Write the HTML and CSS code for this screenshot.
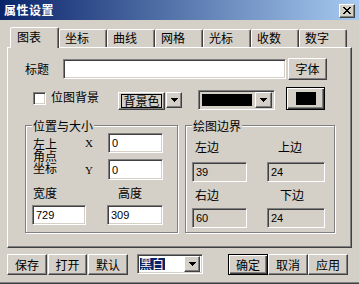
FILE: index.html
```html
<!DOCTYPE html>
<html lang="zh">
<head>
<meta charset="utf-8">
<title>属性设置</title>
<link rel="stylesheet" href="styles.css">
</head>
<body>
<div class="window">
  <div class="titlebar">
    <span class="title">属性设置</span>
    <span class="btn close"><svg width="8" height="7" viewBox="0 0 8 7" shape-rendering="crispEdges"><path d="M0 0h2v1h-2zM6 0h2v1h-2zM1 1h2v1h-2zM5 1h2v1h-2zM2 2h4v1h-4zM3 3h2v1h-2zM2 4h4v1h-4zM1 5h2v1h-2zM5 5h2v1h-2zM0 6h2v1h-2zM6 6h2v1h-2z" fill="#000"/></svg></span>
  </div>

  <div class="tabs">
    <div class="tab active">图表</div>
    <div class="tab">坐标</div>
    <div class="tab">曲线</div>
    <div class="tab">网格</div>
    <div class="tab">光标</div>
    <div class="tab">收数</div>
    <div class="tab">数字</div>
  </div>

  <div class="panel">
    <div class="row row-title">
      <span class="label title-label">标题</span>
      <span class="edit title-edit"></span>
      <span class="btn font-btn">字体</span>
    </div>

    <div class="row row-bg">
      <span class="check"></span>
      <span class="label check-label">位图背景</span>
      <span class="bg-btn btn"><span class="bg-value">背景色</span></span>
      <span class="btn drop drop-bg"><svg width="7" height="4" viewBox="0 0 7 4" shape-rendering="crispEdges"><path d="M0 0h7v1h-1v1h-1v1h-1v1h-1v-1h-1v-1h-1v-1h-1z" fill="#000"/></svg></span>
      <span class="color-combo edit"><span class="color-value"></span><span class="btn drop"><svg width="7" height="4" viewBox="0 0 7 4" shape-rendering="crispEdges"><path d="M0 0h7v1h-1v1h-1v1h-1v1h-1v-1h-1v-1h-1v-1h-1z" fill="#000"/></svg></span></span>
      <span class="btn swatch"><span class="swatch-fill"></span></span>
    </div>

    <div class="groups">
      <div class="group group-pos">
        <div class="group-title">位置与大小</div>
        <div class="coord">
          <span class="corner-label"><span class="cl">左上</span><span class="cl">角点</span><span class="cl">坐标</span></span>
          <span class="axis ax-x">X</span>
          <span class="edit num coord-x">0</span>
          <span class="axis ax-y">Y</span>
          <span class="edit num coord-y">0</span>
        </div>
        <div class="size">
          <span class="label w-label">宽度</span>
          <span class="label h-label">高度</span>
          <span class="edit num w-edit">729</span>
          <span class="edit num h-edit">309</span>
        </div>
      </div>

      <div class="group group-margin">
        <div class="group-title">绘图边界</div>
        <div class="margins">
          <span class="label m-l">左边</span>
          <span class="label m-t">上边</span>
          <span class="edit num disabled">39</span>
          <span class="edit num disabled">24</span>
          <span class="label m-r">右边</span>
          <span class="label m-b">下边</span>
          <span class="edit num disabled">60</span>
          <span class="edit num disabled">24</span>
        </div>
      </div>
    </div>
  </div>

  <div class="footer">
    <span class="btn fbtn">保存</span>
    <span class="btn fbtn open">打开</span>
    <span class="btn fbtn reset">默认</span>
    <span class="edit mode-combo"><span class="mode-value">黑白</span><span class="btn drop"><svg width="7" height="4" viewBox="0 0 7 4" shape-rendering="crispEdges"><path d="M0 0h7v1h-1v1h-1v1h-1v1h-1v-1h-1v-1h-1v-1h-1z" fill="#000"/></svg></span></span>
    <span class="btn fbtn default ok">确定</span>
    <span class="btn fbtn">取消</span>
    <span class="btn fbtn">应用</span>
  </div>
</div>
</body>
</html>
```

FILE: styles.css
```css
* { box-sizing: border-box; }

html, body {
  margin: 0;
  padding: 0;
}

body {
  width: 359px;
  height: 284px;
  overflow: hidden;
  background: #d4d0c8;
  font-family: "Noto Sans CJK SC", "Liberation Sans", sans-serif;
  font-size: 12px;
  line-height: 12px;
  color: #000;
}

.window {
  width: 359px;
  height: 284px;
  background: #d4d0c8;
  box-shadow: inset 0 -1px #404040, inset 0 -2px #808080;
}

/* ---------- title bar ---------- */
.titlebar {
  height: 20px;
  display: flex;
  align-items: center;
  justify-content: space-between;
  padding: 0 4px 0 4px;
  background: linear-gradient(to right, #0a246a, #a6caf0);
}

.title {
  color: #fff;
  font-weight: bold;
  font-size: 12px;
  letter-spacing: 0.5px;
  line-height: 14px;
}

/* ---------- generic 3D controls ---------- */
.btn {
  display: flex;
  align-items: center;
  justify-content: center;
  background: #d4d0c8;
  border: 1px solid;
  border-color: #fff #404040 #404040 #fff;
  box-shadow: inset -1px -1px #808080;
}

.btn.default {
  border-color: #000;
  box-shadow: inset 1px 1px #fff, inset -1px -1px #404040, inset -2px -2px #808080;
}

.edit {
  display: flex;
  align-items: center;
  background: #fff;
  border: 1px solid;
  border-color: #808080 #fff #fff #808080;
  box-shadow: inset 1px 1px #404040, inset -1px -1px #d4d0c8;
}

.edit.disabled { background: #d4d0c8; }

.num {
  font-family: "Liberation Sans", Arial, sans-serif;
  font-size: 11px;
  padding-left: 3px;
}

.label { display: block; white-space: nowrap; }

.close {
  width: 16px;
  height: 14px;
  margin-top: 1px;
}

/* ---------- tabs ---------- */
.tabs {
  display: flex;
  align-items: flex-end;
  height: 20px;
  margin-top: 7px;
  padding-left: 10px;
}

.tab {
  width: 48px;
  height: 18px;
  padding-left: 5px;
  line-height: 16px;
  background: #d4d0c8;
  border: 1px solid;
  border-bottom: 0;
  border-color: #fff #404040 transparent #fff;
  border-radius: 2px 2px 0 0;
  box-shadow: inset -1px 0 #808080;
}

.tab.active {
  position: relative;
  z-index: 1;
  width: 49px;
  height: 21px;
  margin-bottom: -1px;
  padding-left: 6px;
  line-height: 18px;
}

/* ---------- panel ---------- */
.panel {
  width: 345px;
  height: 201px;
  margin-left: 7px;
  border: 1px solid;
  border-color: #fff #404040 #404040 #fff;
  box-shadow: inset -1px -1px #808080;
}

.row { display: flex; }

.row-title {
  margin-top: 10px;
  height: 22px;
  align-items: center;
}

.title-label { margin-left: 17px; width: 24px; }
.title-edit { margin-left: 14px; width: 223px; height: 20px; }
.font-btn { margin-left: 2px; width: 39px; height: 22px; }

.row-bg {
  margin-top: 7px;
  height: 23px;
  align-items: flex-start;
}

.check {
  display: block;
  width: 13px;
  height: 13px;
  margin: 5px 0 0 25px;
  background: #fff;
  border: 1px solid;
  border-color: #808080 #fff #fff #808080;
  box-shadow: inset 1px 1px #404040, inset -1px -1px #d4d0c8;
}

.check-label { margin: 4px 0 0 5px; }

.bg-btn {
  width: 47px;
  height: 18px;
  margin: 5px 0 0 19px;
}

.bg-value {
  display: block;
  width: 41px;
  height: 14px;
  border: 1px solid #000;
  line-height: 12px;
  text-align: center;
}

.drop-bg {
  width: 18px;
  height: 18px;
  margin: 5px 0 0 1px;
}

.color-combo {
  width: 77px;
  height: 20px;
  margin: 3px 0 0 16px;
  padding: 2px;
  justify-content: space-between;
  background: #d4d0c8;
}

.color-value {
  display: block;
  width: 50px;
  height: 12px;
  margin-left: 1px;
  background: #000;
}

.drop {
  width: 16px;
  height: 16px;
}

.color-combo .drop { height: 16px; width: 17px; }

.swatch {
  width: 39px;
  height: 23px;
  margin-left: 11px;
  border-color: #000;
  box-shadow: inset 1px 1px #fff, inset -1px -1px #404040, inset -2px -2px #808080;
}

.swatch-fill {
  display: block;
  width: 20px;
  height: 13px;
  background: #000;
}

/* ---------- group boxes ---------- */
.groups {
  display: flex;
  margin-top: 15px;
}

.group {
  height: 108px;
  border: 1px solid #808080;
  box-shadow: inset 1px 1px #fff, 1px 1px #fff;
}

.group-pos { width: 153px; margin-left: 17px; }
.group-margin { width: 150px; margin-left: 7px; }

.group-title {
  width: max-content;
  margin: -7px 0 0 6px;
  padding: 0 1px;
  line-height: 13px;
  background: #d4d0c8;
}

.coord {
  display: grid;
  grid-template-columns: 52px 23px 55px;
  grid-template-rows: 20px 21px;
  row-gap: 6px;
  margin-top: 1px;
  padding-left: 7px;
}

.corner-label {
  grid-row: 1 / 3;
  grid-column: 1;
  margin-top: 5px;
}

.cl {
  display: block;
  height: 12px;
  line-height: 12px;
}

.axis {
  font-family: "Liberation Serif", serif;
  font-size: 11px;
  align-self: center;
  line-height: 12px;
}

.ax-x { grid-column: 2; grid-row: 1; }
.ax-y { grid-column: 2; grid-row: 2; }
.coord-x { grid-column: 3; grid-row: 1; }
.coord-y { grid-column: 3; grid-row: 2; }

.size {
  display: grid;
  grid-template-columns: 54px 21px 56px;
  grid-template-rows: 12px 20px;
  row-gap: 6px;
  margin-top: 7px;
  padding-left: 6px;
}

.w-label { grid-column: 1; grid-row: 1; margin-left: 1px; }
.h-label { grid-column: 3; grid-row: 1; margin-left: 11px; }
.w-edit { grid-column: 1; grid-row: 2; }
.h-edit { grid-column: 3; grid-row: 2; }

.margins {
  display: grid;
  grid-template-columns: 55px 20px 58px;
  grid-template-rows: 21px 20px 26px 20px;
  margin-top: 9px;
  padding-left: 6px;
}

.margins > :nth-child(odd) { grid-column: 1; }
.margins > :nth-child(even) { grid-column: 3; }

.m-l, .m-r { margin-left: 3px; }
.m-t { margin-left: 11px; }
.m-b { margin-left: 13px; }
.m-r, .m-b { margin-top: 7px; }

/* ---------- footer ---------- */
.footer {
  display: flex;
  align-items: flex-start;
  height: 21px;
  margin-top: 6px;
  padding-left: 7px;
}

.fbtn {
  width: 40px;
  height: 21px;
}

.open { width: 39px; margin-left: 1px; }
.reset { margin-left: 1px; }

.mode-combo {
  width: 66px;
  height: 20px;
  margin-left: 9px;
  padding: 2px;
  justify-content: space-between;
}

.mode-value {
  display: block;
  width: 25px;
  height: 12px;
  background: #0a246a;
  color: #fff;
  line-height: 12px;
}

.ok { margin-left: 25px; }
```
